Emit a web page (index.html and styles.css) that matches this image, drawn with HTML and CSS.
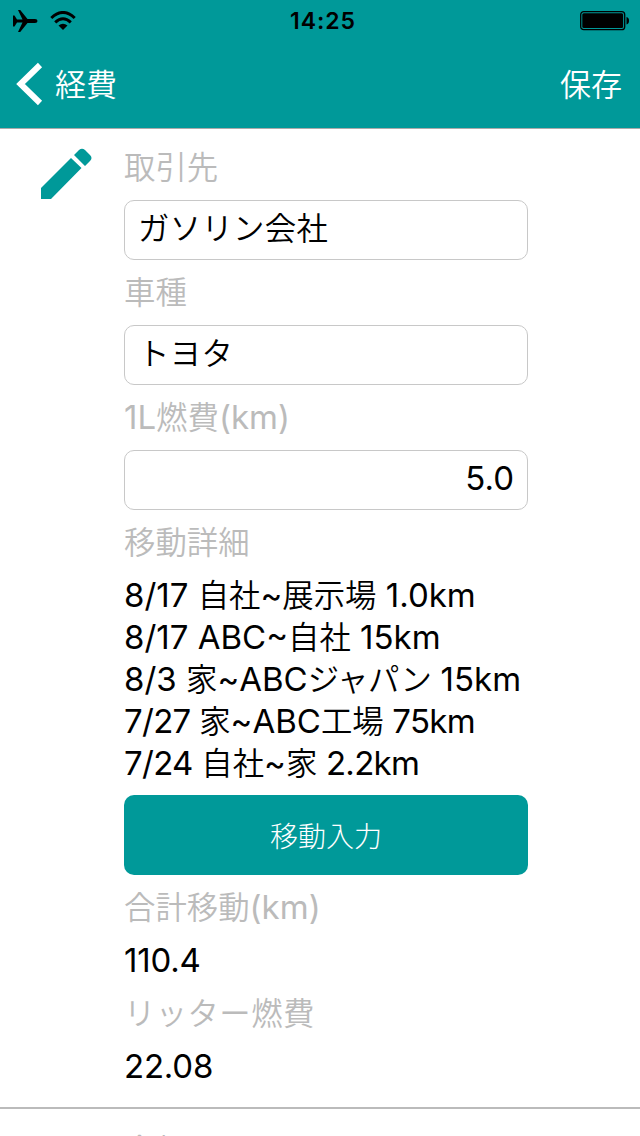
FILE: index.html
```
<!doctype html>
<html lang="ja">
<head>
<meta charset="utf-8">
<meta name="viewport" content="width=device-width, initial-scale=1">
<title>経費</title>
<link rel="stylesheet" href="styles.css">
</head>
<body>

	<header>

		<div class="status">
			<div class="status-left">
				<svg class="plane" width="25" height="22" viewBox="0 0 25 22"><path d="M0 5.500h1.500l2.500 4H9.500L5 0h2.200l7.300 9H22q2.500 0 2.500 2T22 13h-7.500L7.200 22H5l4.500-9.500H4l-2.500 4H0z"/></svg>
				<svg class="wifi" width="26" height="20" viewBox="0 0 26 20"><path d="M1.300 7Q13-4 24.700 7M5.200 11.300Q13 4.300 20.800 11.300" fill="none" stroke="#000" stroke-width="3"/><path d="M8.500 14.500Q13 10.800 17.500 14.500L13 19z"/></svg>
			</div>
			<div class="clock">14:25</div>
			<div class="status-right">
				<svg width="50" height="20" viewBox="0 0 50 20"><rect x=".7" y=".7" width="44" height="18" rx="3" fill="none" stroke="#000" stroke-width="1.300"/><rect x="2.300" y="2.300" width="40.800" height="14.800" rx="1.500"/><path d="M46.500 6q2.500.5 2.500 3.700t-2.500 3.700z"/></svg>
			</div>
		</div>

		<nav>
			<a class="back"><svg width="27" height="44" viewBox="0 0 27 44"><path d="M24 3L4.500 22l19.500 19" fill="none" stroke="#fff" stroke-width="6"/></svg>経費</a>
			<a class="save">保存</a>
		</nav>

	</header>

	<main>

		<section class="entry">

			<svg class="pencil" width="52" height="52" viewBox="0 0 52 52"><path d="M1 40L31 10l10.500 10L11 51H1zM34 7l5-5q3-2.500 6 0l5 5q3 3 0 6l-5 5z"/></svg>

			<div class="fields">

				<div class="label">取引先</div>
				<div class="input">ガソリン会社</div>

				<div class="label">車種</div>
				<div class="input">トヨタ</div>

				<div class="label"><span class="en">1L</span>燃費<span class="en">(km)</span></div>
				<div class="input number"><span class="en">5.0</span></div>

				<div class="label">移動詳細</div>
				<ul class="trips">
					<li><span class="en">8/17 </span>自社<span class="en">~</span>展示場<span class="en"> 1.0km</span></li>
					<li><span class="en">8/17 ABC~</span>自社<span class="en"> 15km</span></li>
					<li><span class="en">8/3 </span>家<span class="en">~ABC</span><span class="kana">ジャパン</span><span class="en"> 15km</span></li>
					<li><span class="en tight">7/27 </span>家<span class="en">~ABC</span>工場<span class="en tight"> 75km</span></li>
					<li><span class="en tight">7/24 </span>自社<span class="en">~</span>家<span class="en tight"> 2.2km</span></li>
				</ul>

				<div class="button">移動入力</div>

				<div class="label">合計移動<span class="en">(km)</span></div>
				<div class="value"><span class="en">110.4</span></div>

				<div class="label long">リッター燃費</div>
				<div class="value"><span class="en">22.08</span></div>

			</div>

		</section>

		<section class="entry next">
			<div class="fields">
				<div class="label">金額</div>
			</div>
		</section>

	</main>

</body>
</html>
```
FILE: styles.css
```
* { box-sizing: border-box; }

:root { --teal: #009999; --gray: #bbb; }

html { height: 100%; }

body { background: #fff; color: #000; display: flex; flex-direction: column; font: 350 31.4px "Noto Sans CJK JP", sans-serif;
	height: 100%; margin: 0; overflow: hidden; }

header { background: var(--teal); border-bottom: 1px solid #aaa; flex: none; height: 129px; }

.status { align-items: center; display: grid; grid-template-columns: 1fr auto 1fr; height: 40px; padding: 0 10px 0 13px; }
.status-left { align-items: center; display: flex; gap: 12px; }
.status-right { display: flex; justify-content: flex-end; }
.clock { font: 600 23px/42px Inter, sans-serif; letter-spacing: 1px; padding-left: 3px; }

nav { align-items: center; color: #fff; display: flex; height: 88px; justify-content: space-between; line-height: 84px;
	padding: 0 18px 2px 16px; }
.back { align-items: center; display: flex; gap: 12px; }
.back svg { margin-top: 2px; }
.back, .save { font-size: 31px; }

main { flex: 1; overflow: hidden; }

.entry { border-bottom: 2px solid var(--gray); display: flex; height: 980px; padding: 6px 0 0 124px; position: relative; }
.pencil { fill: var(--teal); left: 40px; position: absolute; top: 19px; }
.next { padding-top: 9px; }

.fields { width: 404px; }

.en { font: 400 33px/1 Inter, sans-serif; }
.tight { letter-spacing: -0.7px; }
.kana { letter-spacing: -0.5px; }

.label { color: var(--gray); height: 65px; line-height: 61px; }
.long { letter-spacing: 0.4px; }
.input { border: 1px solid #c8c8c8; border-radius: 10px; height: 60px; letter-spacing: 0.3px; line-height: 52px; padding: 0 13px; }
.number { letter-spacing: 0; text-align: right; }

.trips { line-height: 38px; list-style: none; margin: 0 0 10px; padding: 0; }
.trips li { height: 42px; white-space: pre; }

.button { background: var(--teal); border-radius: 10px; color: #fff; font-size: 28px; font-weight: 300; height: 80px; line-height: 80px; text-align: center; }

.value { height: 41px; letter-spacing: -0.2px; line-height: 37px; }
```
